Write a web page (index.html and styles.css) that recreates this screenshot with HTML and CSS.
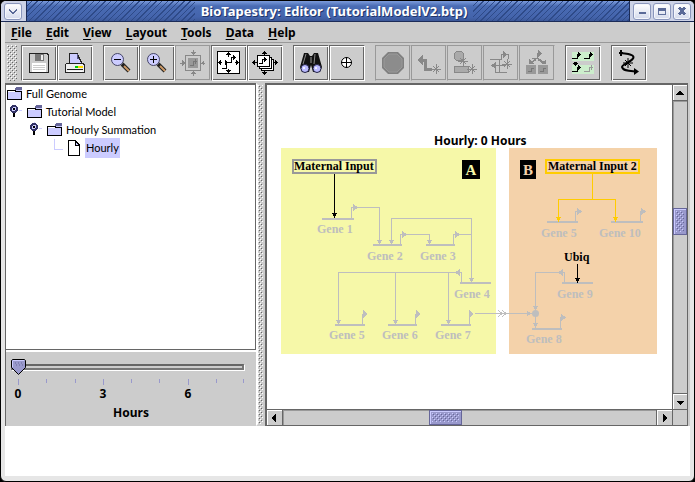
FILE: index.html
```
<!DOCTYPE html>
<html lang="en">
<head>
<meta charset="utf-8">
<title>BioTapestry: Editor (TutorialModelV2.btp)</title>
<link rel="stylesheet" href="styles.css">
</head>
<body>
<svg class="defs" aria-hidden="true">
  <defs>
    <g id="star"><path d="M0 -5V5M-5 0H5M-3 -3L3 3M3 -3L-3 3" fill="none" stroke="currentColor"/></g>
    <g id="folder"><path d="M1 4H9L11 1H16V13H1Z" fill="#ccf"/><path d="M10 1H16V4H9Z" fill="#669"/><path d="M1 13V4H9V5H15V13Z" fill="#ccf" stroke="#000"/><path d="M2 5H9" stroke="#fff"/></g>
    <g id="handle"><path d="M5 8V13" stroke="#000" stroke-width="2"/><circle cx="5" cy="5" r="3" fill="#ccf" stroke="#336" stroke-width="2"/><circle cx="5" cy="5" r="1" fill="#000"/></g>
  </defs>
</svg>
<div class="window">
  <header class="titlebar">
    <div class="cap"><button class="win-btn" aria-label="Window menu"><svg viewBox="0 0 16 16"><path d="M4 6L8 10L12 6" fill="none" stroke="#5a6a98" stroke-width="2"/></svg></button></div>
    <div class="caption"><span class="hatch"></span><h1>BioTapestry: Editor (TutorialModelV2.btp)</h1><span class="hatch"></span></div>
    <div class="cap cap-right">
      <button class="win-btn" aria-label="Minimize"><svg viewBox="0 0 16 16"><path d="M5 9.500H12" stroke="#5a6a98" stroke-width="3"/></svg></button>
      <button class="win-btn" aria-label="Maximize"><svg viewBox="0 0 16 16"><path d="M4.500 4V11.500H11.500V4" fill="none" stroke="#5a6a98"/><path d="M4 5.500H12" stroke="#5a6a98" stroke-width="3"/></svg></button>
      <button class="win-btn" aria-label="Close"><svg viewBox="0 0 16 16"><path d="M5 4L11 11M11 4L5 11" stroke="#5a6a98" stroke-width="3"/></svg></button>
    </div>
  </header>
  <div class="frame">
    <nav class="menubar">
      <button><u>F</u>ile</button><button><u>E</u>dit</button><button><u>V</u>iew</button><button><u>L</u>ayout</button><button><u>T</u>ools</button><button><u>D</u>ata</button><button><u>H</u>elp</button>
    </nav>
    <div class="toolbar">
      <span class="grip bumps"></span>
      <div class="group">
        <button class="tool" aria-label="Save"><svg viewBox="1 1 34 34"><path d="M9 8.500H26L27.500 10V27.500H8.500V9Z" fill="#ccc" stroke="#222"/><path d="M14 9H23V16H14Z" fill="#777"/><path d="M20 10H22V15H20Z" fill="#eee"/><path d="M11 18H25V27H11Z" fill="#fff"/><path d="M12 20.500H24M12 22.500H24M12 24.500H24" stroke="#ccc"/></svg></button>
        <button class="tool" aria-label="Print"><svg viewBox="1 1 34 34"><path d="M12.500 18.500V8.500H20L25 18.500Z" fill="#ccf" stroke="#222"/><path d="M20 9V13H22" fill="none" stroke="#558"/><path d="M8.500 19.500L10 18.500H26L27.500 20V27.500H8.500Z" fill="#eee" stroke="#222"/><path d="M10 24.500H26" stroke="#222"/><path d="M11 26H25" stroke="#fff"/><path d="M18 21.500H21" stroke="#0c0" stroke-width="2"/><path d="M21 21.500H26" stroke="#fd0" stroke-width="2"/></svg></button>
      </div>
      <div class="group">
        <button class="tool" aria-label="Zoom out"><svg class="soft" viewBox="1 1 34 34"><path d="M19 19L26 26" stroke="#222" stroke-width="4"/><path d="M21 21L26 26" stroke="#c96" stroke-width="2"/><circle cx="14.500" cy="14.500" r="6" fill="#ccf" stroke="#446"/><path d="M11 14.500H18" stroke="#000"/></svg></button>
        <button class="tool" aria-label="Zoom in"><svg class="soft" viewBox="1 1 34 34"><path d="M19 19L26 26" stroke="#222" stroke-width="4"/><path d="M21 21L26 26" stroke="#c96" stroke-width="2"/><circle cx="14.500" cy="14.500" r="6" fill="#ccf" stroke="#446"/><path d="M11 14.500H18M14.500 11V18" stroke="#000"/></svg></button>
        <button class="tool" disabled aria-label="Zoom to selected"><svg viewBox="1 1 34 34"><path d="M10.500 10.500H25.500V25.500H10.500Z" fill="none" stroke="currentColor"/><path d="M13 13H23V23H13Z" fill="#999"/><path d="M15 20.500H18.500V16.500H22M20.500 14V19" fill="none" stroke="#777"/><path d="M18 5V10M7 18H5M6 18H10M30 18H26M18 26V31" stroke="currentColor"/><path d="M15 7H21L18 10ZM15 29H21L18 26ZM7 15V21L10 18ZM29 15V21L26 18Z" fill="currentColor"/></svg></button>
        <button class="tool" aria-label="Zoom to model"><svg viewBox="1 1 34 34"><path d="M6.500 6.500H28.500V28.500H6.500Z" fill="#fff" stroke="#000"/><path d="M11 23.500H15.500V17.500H20.500V12.500H24M17.500 8V12M17.500 24V28M7 17.500H11M24 17.500H28" fill="none" stroke="#000"/><path d="M22 10V15L25 12.500ZM14 15V20L17 17.500ZM15 10L17.500 7L20 10ZM15 25L17.500 28L20 25ZM10 15L7 17.500L10 20ZM25 15L28 17.500L25 20Z"/></svg></button>
        <button class="tool" aria-label="Zoom to all"><svg viewBox="1 1 34 34"><path d="M14.500 14.500H26.500V25.500H14.500Z" fill="#fff" stroke="#000"/><path d="M12.500 12.500H24.500V23.500H12.500Z" fill="#fff" stroke="#000"/><path d="M10.500 10.500H22.500V21.500H10.500Z" fill="#fff" stroke="#000"/><path d="M12 18.500H15.500V14.500H18M17.500 6V10M17.500 26V30M6 17.500H10M26 17.500H30" fill="none" stroke="#000"/><path d="M17 12V17L20 14.500ZM15 9L17.500 6L20 9ZM15 27L17.500 30L20 27ZM8 15L5 17.500L8 20ZM28 15L31 17.500L28 20Z"/></svg></button>
      </div>
      <div class="group">
        <button class="tool" aria-label="Search"><svg class="soft" viewBox="1 1 34 34"><path d="M11 8H15L17 11H19L21 8H25L29 22L27 27H20L18 20L16 27H9L7 22Z" fill="#111"/><path d="M13 9L10 19M22 9L21 19" stroke="#888"/><path d="M18 12V18" stroke="#555" stroke-width="2"/><circle cx="12" cy="23.500" r="4" fill="#bbf" stroke="#224"/><circle cx="24" cy="23.500" r="4" fill="#bbf" stroke="#224"/><circle cx="11" cy="23" r="1" fill="#fff"/><circle cx="23" cy="23" r="1" fill="#fff"/></svg></button>
        <button class="tool" aria-label="Center"><svg class="soft" viewBox="1 1 34 34"><circle cx="17.500" cy="17.500" r="5" fill="#fff" stroke="#000"/><path d="M12 17.500H23M17.500 12V23" stroke="#000"/></svg></button>
      </div>
      <div class="group">
        <button class="tool" disabled aria-label="Stop"><svg class="soft" viewBox="1 1 34 34"><path d="M13 7H23L29 13V23L23 29H13L7 23V13Z" fill="#808080"/><path d="M14 9H22L27 14V22L22 27H14L9 22V14Z" fill="#8c8c8c" stroke="#999"/></svg></button>
        <button class="tool" disabled aria-label="Add gene"><svg viewBox="1 1 34 34"><path d="M6 15L12 10V20Z" fill="currentColor"/><path d="M11 15H14V24H21" fill="none" stroke="currentColor" stroke-width="3"/><use href="#star" x="25" y="24"/></svg></button>
        <button class="tool" disabled aria-label="Add node"><svg viewBox="1 1 34 34"><circle cx="12" cy="11" r="5" fill="#aaa" stroke="currentColor"/><path d="M7.500 21.500H21.500V27.500H7.500Z" fill="#aaa" stroke="currentColor"/><use href="#star" x="16" y="16"/><use href="#star" x="25" y="24"/></svg></button>
        <button class="tool" disabled aria-label="Add link"><svg viewBox="1 1 34 34"><path d="M7 14.500H18.500V9.500H21M25.500 14V9.500H22M12.500 22V27.500H24M16.500 15V27M8 20.500H22" fill="none" stroke="currentColor"/><path d="M20 6L24 9.500L20 13ZM13 17L8 20.500L13 24Z" fill="currentColor"/><use href="#star" x="24" y="19"/></svg></button>
        <button class="tool" disabled aria-label="Build tree"><svg viewBox="1 1 34 34"><path d="M13 13.500H18.500V8.500H20" fill="none" stroke="currentColor"/><path d="M19 5L23 8.500L19 12Z" fill="currentColor"/><path d="M17 14L12 18M19 14L25 18" stroke="currentColor" stroke-width="2"/><path d="M10 14V19H15ZM27 14V19H22Z" fill="currentColor"/><path d="M7 20H17V29H7ZM19 20H29V29H19Z" fill="#999"/><path d="M9 26.500H12.500V23.500H15M21 26.500H24.500V23.500H27" fill="none" stroke="#777"/></svg></button>
      </div>
      <div class="group">
        <button class="tool" aria-label="Propagate"><svg viewBox="1 1 34 34"><path d="M7 7H29V16H7ZM7 20H29V29H7Z" fill="#cec"/><path d="M7 13.500H12.500V9.500H15M19 13.500H24.500V9.500H27M7 26.500H12.500V22.500H15" fill="none" stroke="#000"/><path d="M13 7L16 9.500L13 12ZM25 7L28 9.500L25 12ZM13 20L16 22.500L13 25ZM7 18H13L10 21Z"/><path d="M9 17.500H12" stroke="#000"/><path d="M19 26.500H24.500V22.500H28M26.500 20V25" fill="none" stroke="#999"/></svg></button>
      </div>
      <div class="group">
        <button class="tool" aria-label="Relayout link"><svg class="soft" viewBox="1 1 34 34"><path d="M10 8C16 9 22 9 22.500 12C23 16 11 19 11 22C12 26 18 26 24 26.500" fill="none" stroke="#000" stroke-width="2"/><path d="M10 5V11M8 8H12" stroke="#000" stroke-width="2"/><path d="M23 23V30L28 26.500Z"/><use href="#star" x="17" y="18"/></svg></button>
      </div>
    </div>
    <main class="content">
      <aside class="side">
        <ul class="tree">
          <li><svg width="17" height="16"><use href="#folder"/></svg><span>Full Genome</span></li>
          <li class="level1"><svg width="17" height="16"><path d="M10 6H13" stroke="#ccf"/><use href="#handle"/></svg><svg width="17" height="16"><use href="#folder"/></svg><span>Tutorial Model</span></li>
          <li class="level2"><svg width="17" height="16"><path d="M5 0V2M10 6H13" stroke="#ccf"/><use href="#handle"/></svg><svg width="17" height="16"><use href="#folder"/></svg><span>Hourly Summation</span></li>
          <li class="level3"><svg width="14" height="18"><path d="M1 0V10H10" fill="none" stroke="#ccf"/></svg><svg width="14" height="18"><path d="M1.500 1.500H8L12.500 6V16.500H1.500Z" fill="#fff" stroke="#000"/><path d="M8 2V6H12Z" fill="#ccf" stroke="#000"/></svg><span class="selected">Hourly</span></li>
        </ul>
        <div class="time">
          <input id="hours" class="slider" type="range" min="0" max="8" value="0">
          <svg class="scale" viewBox="0 0 246 26"><path d="M12.500 3V9M97.500 3V9M182.500 3V9M40.500 3V7M69.500 3V7M125.500 3V7M153.500 3V7M210.500 3V7M237.500 3V7" stroke="#99c"/><text x="12" y="22">0</text><text x="97" y="22">3</text><text x="182" y="22">6</text></svg>
          <label for="hours">Hours</label>
        </div>
      </aside>
      <div class="divider bumps"></div>
      <section class="view">
        <div class="canvas">
          <svg class="network" viewBox="267 85 405 324">
            <path d="M281 148H496V354H281Z" fill="#f6f8a8"/>
            <path d="M509 148H657V354H509Z" fill="#f4d2aa"/>
            <text class="heading" x="434" y="145">Hourly: 0 Hours</text>
            <path d="M462 160H480V179H462ZM520 160H536V179H520Z"/>
            <text class="badge" x="471" y="175" fill="#f6f8a8">A</text><text class="badge" x="528" y="175" fill="#f4d2aa">B</text>
            <g class="wire">
              <path d="M357 207.500H379.500V241M391.500 241V218.500H471.500V280M406 234.500H429.500V241M459 234.500H471.500M457 272.500H338.500V321M395.500 272.500V321M448.500 272.500V321M475 313.500H529M559 272.500H535.500V308M535.500 313V325"/>
              <path d="M498 310L502 313.500L498 317M502 310L506 313.500L502 317"/>
              <path class="base" d="M322 219H354M373 245H402M426 245H455M460 283H491M335 325H365M388 325H417M441 325H471M547 222H578M611 222H643M562 283H593M532 329H562"/>
              <path d="M351.500 218V207.500H354M400.500 245V234.500H403M453.500 245V234.500H456M461.500 283V272.500H459M362.500 325V314H364M415.500 325V314H418M469.500 325V314H472M575.500 222V211.500H578M640.500 222V211.500H643M564.500 283V272.500H562M560.500 329V317.500H563"/>
            </g>
            <path class="heads" d="M353 204L358 207.500L353 211ZM402 231L407 234.500L402 238ZM455 231L460 234.500L455 238ZM460 269L455 272.500L460 276ZM363 310L368 314L363 318ZM416 310L421 314L416 318ZM469 310L474 314L469 318ZM577 208L582 211.500L577 215ZM641 208L646 211.500L641 215ZM563 269L558 272.500L563 276ZM561 314L566 317.500L561 321ZM377 240H382L379.500 245ZM389 240H394L391.500 245ZM427 240H432L429.500 245ZM469 278H474L471.500 283ZM336 320H341L338.500 325ZM393 320H398L395.500 325ZM446 320H451L448.500 325ZM527 311V316L532 313.500ZM533 306H538L535.500 311ZM533 323H538L535.500 328Z"/>
            <circle class="heads soft" cx="535.500" cy="313.500" r="3.500"/>
            <path d="M293 160H376V173H293Z" fill="none" stroke="#999" stroke-width="2"/>
            <path d="M334.500 174V216M577.500 264V280" stroke="#000"/>
            <path d="M332 213H337L334.500 218ZM575 278H580L577.500 283Z"/>
            <path d="M546 160H639V173H546Z" fill="none" stroke="#fc0" stroke-width="2"/>
            <path d="M592.500 173V199.500M558.500 219V199.500H615.500V219" fill="none" stroke="#fc0"/>
            <path d="M556 217H561L558.500 222ZM613 217H618L615.500 222Z" fill="#fc0"/>
            <g class="names">
              <text x="294" y="170">Maternal Input</text><text x="548" y="170">Maternal Input 2</text><text x="564" y="261">Ubiq</text>
              <g class="off"><text x="317" y="233">Gene 1</text><text x="367" y="260">Gene 2</text><text x="420" y="260">Gene 3</text><text x="454" y="298">Gene 4</text><text x="329" y="339">Gene 5</text><text x="382" y="339">Gene 6</text><text x="435" y="339">Gene 7</text><text x="541" y="237">Gene 5</text><text x="599" y="237">Gene 10</text><text x="557" y="298">Gene 9</text><text x="526" y="343">Gene 8</text></g>
            </g>
          </svg>
        </div>
        <div class="bar vertical"><button class="arrow" aria-label="Scroll up"><svg viewBox="0 0 14 14"><path d="M7 4L11 9H3Z"/></svg></button><div class="track"><span class="thumb"></span></div><button class="arrow" aria-label="Scroll down"><svg viewBox="0 0 14 14"><path d="M7 10L11 6H3Z"/></svg></button></div>
        <div class="bar horizontal"><button class="arrow" aria-label="Scroll left"><svg viewBox="0 0 14 14"><path d="M4 7L9 3V11Z"/></svg></button><div class="track"><span class="thumb"></span></div><button class="arrow" aria-label="Scroll right"><svg viewBox="0 0 14 14"><path d="M10 7L6 3V11Z"/></svg></button></div>
        <div class="corner"></div>
      </section>
    </main>
  </div>
</div>
</body>
</html>
```
FILE: styles.css
```
* { box-sizing: border-box; }
body { margin: 0; background: #000; font: bold 12px "Noto Sans", sans-serif; color: #000; }
button { margin: 0; padding: 0; border: 0; background: none; font: inherit; color: inherit; }
svg { display: block; shape-rendering: crispEdges; }
.soft { shape-rendering: auto; }
.defs { position: absolute; width: 0; height: 0; }

.window { display: flex; flex-direction: column; min-height: 100vh; border: 1px solid #000; border-radius: 6px; background: #e6e6e6; overflow: hidden; }
.titlebar { display: flex; height: 21px; border-bottom: 1px solid #1c2c58; background: #ccd2e6; }
.cap { display: flex; align-items: center; gap: 2px; padding: 0 4px 0 3px; border-right: 1px solid #1c2c58; }
.cap-right { border-right: 0; border-left: 1px solid #1c2c58; padding: 0 3px; }
.win-btn { width: 18px; height: 17px; border: 1px solid #8a96bc; border-radius: 3px; background: linear-gradient(#fff, #d4daec); box-shadow: inset 0 0 0 1px #f4f6fc; }
.win-btn svg { width: 16px; height: 15px; }
.caption { flex: 1; display: flex; align-items: center; padding-left: 12px; background: linear-gradient(#7c9cdc, #4a6cb4 25%, #4464ac 80%, #3c5898); }
.caption h1 { margin: 0; padding: 0 6px; font-size: 13px; line-height: 18px; color: #fff; text-shadow: 1px 1px 0 #203468; }
.hatch { flex: 1; align-self: stretch; background: repeating-linear-gradient(135deg, transparent 0 3px, #2e4a88 3px 4px); }
.hatch:first-child { margin-left: -12px; flex-basis: 12px; }

.frame { flex: 1; margin: 0 4px 5px; background: #fff; }
.menubar { display: flex; gap: 14px; height: 21px; padding: 0 6px; border-bottom: 1px solid #999; background: #ccc; }
.menubar button { line-height: 22px; }
.menubar u { text-underline-offset: 2px; }
.toolbar { display: flex; gap: 10px; padding: 2px 2px; background: #ccc; }
.grip { width: 10px; margin-right: -6px; }
.group { display: flex; }
.bumps { background-image: url("data:image/svg+xml,%3Csvg xmlns='http://www.w3.org/2000/svg' width='4' height='4' shape-rendering='crispEdges'%3E%3Cpath d='M0 0h1v1H0zM2 2h1v1H2z' fill='white'/%3E%3Cpath d='M1 1h1v1H1zM3 3h1v1H3z' fill='%23666'/%3E%3C/svg%3E"); }
.tool { width: 36px; height: 36px; border: 1px solid; border-color: #666 #fff #fff #666; box-shadow: inset 1px 1px 0 #fff, inset -1px -1px 0 #666; }
.tool svg { width: 34px; height: 34px; }
.tool:disabled { color: #888; border-color: #999 #ccc #ccc #999; box-shadow: inset -1px -1px 0 #999; }

.content { display: flex; padding-right: 2px; background: #ccc; }
.side { display: flex; flex-direction: column; width: 251px; border-left: 1px solid #666; }
.tree { flex: 1; margin: 0; padding: 0; list-style: none; background: #fff; border: solid #666; border-width: 2px 1px 1px 0; font: 11px Lato, sans-serif; }
.tree li { display: flex; align-items: center; height: 18px; }
.tree span { margin-left: 2px; padding: 0 1px; line-height: 18px; }
.level1 { padding-left: 3px; }
.level2 { padding-left: 23px; }
.level3 { padding-left: 47px; }
.tree .selected { margin-left: 4px; background: #ccf; line-height: 20px; }
.time { display: flex; flex-direction: column; padding: 6px 4px 4px 0; border-top: 2px solid #fff; }
.slider { appearance: none; width: 233px; height: 18px; margin: 0 0 0 5px; background: none; }
.slider::-webkit-slider-runnable-track { height: 6px; border: 2px solid #777; border-top-color: #666; background: #ccc; box-shadow: 1px 1px 0 #fff; }
.slider::-webkit-slider-thumb { appearance: none; width: 15px; height: 16px; margin-top: -7px; margin-left: -2px; background: url("data:image/svg+xml,%3Csvg xmlns='http://www.w3.org/2000/svg' width='15' height='16'%3E%3Cpath d='M1.500.5h12l1 1V8.500L7.500 15.500.5 8.500V1.500z' fill='%2399c' stroke='black'/%3E%3Cpath d='M2 1.500h11M1.500 2v6' stroke='%23ccf'/%3E%3Cpath d='M4 4h1M7 4h1M10 4h1M5 6h1M8 6h1M11 6h1' stroke='%23669'/%3E%3C/svg%3E"); }
.scale { width: 246px; height: 26px; }
.scale text { text-anchor: middle; }
.time label { padding: 2px 0 0 4px; line-height: 18px; text-align: center; }
.divider { width: 9px; border: 2px solid #ccc; border-left-color: #fff; }

.view { flex: 1; display: grid; grid-template: 1fr 16px / 1fr 15px; border: solid #666; border-width: 2px 1px 1px 2px; background: #ccc; }
.canvas { display: flex; justify-content: center; background: #fff; overflow: hidden; }
.network { flex: none; width: 405px; height: 324px; }
.network .heading { font-size: 12px; }
.badge { font: bold 15px "Liberation Serif", serif; text-anchor: middle; }
.wire path { fill: none; stroke: #bebebe; stroke-width: 1px; }
.wire .base { stroke-width: 2px; }
.heads { fill: #bebebe; }
.names { font: bold 12px "Liberation Serif", serif; }
.off { fill: #bebebe; }
.bar { display: flex; }
.vertical { flex-direction: column; border-left: 1px solid #666; }
.horizontal { border-top: 1px solid #666; }
.track { flex: 1; display: flex; border: solid #666; border-width: 0 1px; box-shadow: inset 1px 1px 0 #999; }
.track::before, .track::after { content: ""; }
.vertical .track { flex-direction: column; border-width: 1px 0; }
.vertical .track::before { flex: 37; }
.vertical .track::after { flex: 55; }
.horizontal .track::before { flex: 42; }
.horizontal .track::after { flex: 56; }
.thumb { padding: 2px; border: 1px solid #669; background: #99c url("data:image/svg+xml,%3Csvg xmlns='http://www.w3.org/2000/svg' width='4' height='4' shape-rendering='crispEdges'%3E%3Cpath fill='%2399c' d='M0 0h4v4H0z'/%3E%3Cpath d='M0 0h1v1H0zM2 2h1v1H2z' fill='%23ccf'/%3E%3Cpath d='M1 1h1v1H1zM3 3h1v1H3z' fill='%23669'/%3E%3C/svg%3E") content-box; box-shadow: inset 1px 1px 0 #ccf, inset 0 0 0 2px #99c; }
.vertical .thumb { height: 27px; }
.horizontal .thumb { width: 33px; }
.arrow { width: 15px; height: 15px; box-shadow: inset 1px 1px 0 #fff; }
.vertical .arrow { width: 14px; }
.arrow svg { width: 14px; height: 14px; }
.corner { border: solid #666; border-width: 1px 0 0 1px; }
```
